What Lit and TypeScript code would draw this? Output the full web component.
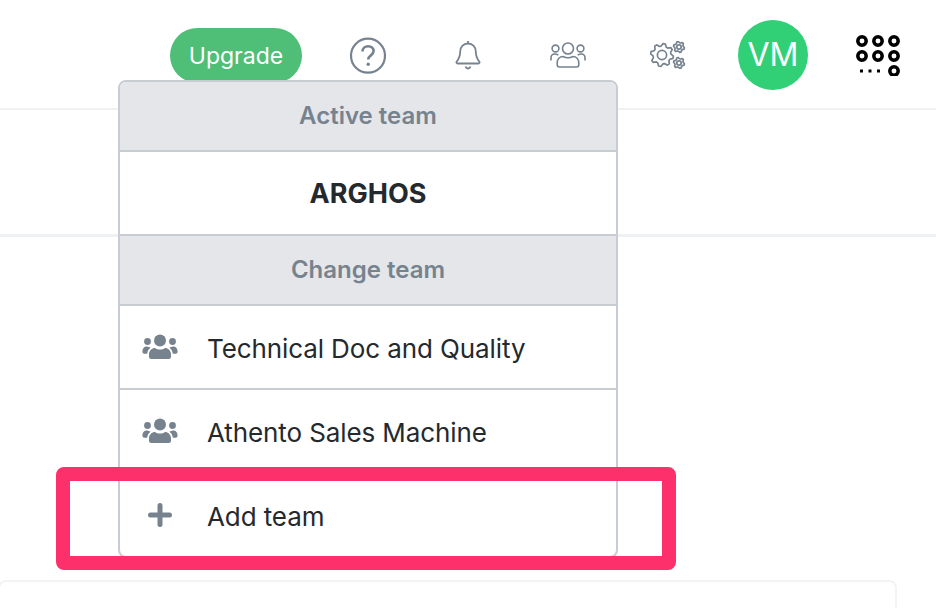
import { LitElement, html, css, svg } from 'lit';
import { customElement } from 'lit/decorators.js';

const teamIcon = html`
  <svg class="row-icon" width="36" height="26" viewBox="0 0 36 26" fill="#76838f">
    <circle cx="18" cy="6.5" r="6" />
    <circle cx="5.5" cy="7.5" r="3.4" />
    <circle cx="30.5" cy="7.5" r="3.4" />
    <path d="M9.5 25a2.5 2.5 0 0 1-2.5-2.5v-2c0-4 3-6.5 6-6.5 1.500 1 3 1.500 5 1.500s3.500-.5 5-1.500c3 0 6 2.500 6 6.500v2a2.500 2.500 0 0 1-2.500 2.500z" />
    <path d="M.4 17.500c0-3 1.600-5 4-5 1.500 0 3 .6 4.200 1.300-2 1.500-3.200 3.400-3.400 6H2.400c-1.300 0-2-1-2-2.300z" />
    <path d="M35.600 17.500c0-3-1.600-5-4-5-1.500 0-3 .6-4.200 1.300 2 1.500 3.200 3.400 3.400 6h2.800c1.300 0 2-1 2-2.300z" />
  </svg>
`;

const gear = (cx: number, cy: number, r: number, teeth: number) => {
  const pts: string[] = [];
  for (let i = 0; i < teeth * 4; i++) {
    const a = (i / (teeth * 4)) * Math.PI * 2 + Math.PI / teeth / 4;
    const rad = i % 4 < 2 ? r : r * 0.78;
    pts.push(`${(cx + Math.cos(a) * rad).toFixed(2)},${(cy + Math.sin(a) * rad).toFixed(2)}`);
  }
  return svg`<polygon points=${pts.join(' ')} stroke-linejoin="round" /><circle cx=${cx} cy=${cy} r=${r * 0.4} />`;
};

@customElement('app-root')
export class AppRoot extends LitElement {
  static styles = css`
    :host {
      display: block;
      position: relative;
      width: 936px;
      height: 608px;
      overflow: hidden;
      background: #fff;
      font-family: Inter, 'Noto Sans', sans-serif;
      color: #24292e;
    }

    .topbar {
      height: 106px;
      padding-top: 2px;
      border-bottom: 2px solid #f0f1f2;
      display: flex;
      align-items: center;
      justify-content: flex-end;
      padding-right: 36px;
    }

    .upgrade {
      width: 132px;
      height: 54px;
      padding-top: 1px;
      border-radius: 28px;
      background: #4fbe77;
      color: #fff;
      font-size: 23px;
      display: flex;
      align-items: center;
      justify-content: center;
      margin-right: 16px;
    }

    .nav-icon {
      width: 100px;
      display: flex;
      justify-content: center;
      align-items: center;
    }

    .avatar {
      width: 70px;
      height: 70px;
      padding-bottom: 1px;
      box-sizing: border-box;
      border-radius: 50%;
      background: #31d077;
      color: #fff;
      font-size: 32px;
      display: flex;
      align-items: center;
      justify-content: center;
      margin-left: 20px;
      margin-right: 48px;
    }

    .apps {
      flex: none;
    }

    .subbar {
      height: 124px;
      border-bottom: 3px solid #f0f1f2;
    }

    .content {
      padding: 343px 39px 0 0;
    }

    .card {
      height: 60px;
      border: 2px solid #f2f3f4;
      border-radius: 8px;
      margin-left: -2px;
    }

    .menu {
      position: absolute;
      left: 118px;
      top: 80px;
      width: 500px;
      box-sizing: border-box;
      border: 2px solid #c8ccd3;
      border-radius: 8px;
      background: #fff;
      overflow: hidden;
    }

    .menu-title {
      height: 66px;
      padding-bottom: 2px;
      background: #e4e6ea;
      color: #76838f;
      font-size: 24px;
      font-weight: 600;
      display: flex;
      align-items: center;
      justify-content: center;
    }

    .menu-active {
      height: 82px;
      font-size: 27px;
      font-weight: 700;
      display: flex;
      align-items: center;
      justify-content: center;
    }

    .menu-row {
      height: 82px;
      display: flex;
      align-items: center;
      font-size: 26px;
      letter-spacing: -0.1px;
      padding-left: 22px;
    }

    .menu-row span {
      padding-top: 2px;
    }

    .menu > * + * {
      border-top: 2px solid #c8ccd3;
    }

    .row-icon {
      flex: none;
      margin-right: 29px;
    }

    .highlight {
      position: absolute;
      left: 56px;
      top: 467px;
      width: 620px;
      height: 103px;
      box-sizing: border-box;
      border: 14px solid #fe306c;
      border-radius: 8px;
    }
  `;

  render() {
    return html`
      <div class="topbar">
        <div class="upgrade">Upgrade</div>
        <div class="nav-icon">
          <svg width="38" height="38" viewBox="0 0 38 38" fill="none" stroke="#76838f" stroke-width="2.2">
            <g transform="translate(0 .7)">
              <circle cx="19" cy="19" r="17" />
              <path d="M13.500 14.800c0-3.200 2.500-5.300 5.600-5.300s5.500 2 5.500 4.900c0 4.300-5.400 4.200-5.400 8.400" stroke-width="2.600" />
              <circle cx="19.200" cy="27.500" r="1.700" fill="#76838f" stroke="none" />
            </g>
          </svg>
        </div>
        <div class="nav-icon">
          <svg width="26" height="30" viewBox="0 0 26 30" fill="none" stroke="#76838f" stroke-width="1.800" stroke-linejoin="round">
            <path d="M13 1v2.500M13 3.500c-4.800 0-7.800 3.500-7.800 8 0 6-1.700 7.800-3.500 10-.8 1 0 2 .9 2h20.800c.9 0 1.700-1 .9-2-1.800-2.200-3.500-4-3.500-10 0-4.500-3-8-7.800-8z" />
            <path d="M10.500 26.500c.4 1.300 1.300 2 2.500 2s2.100-.7 2.500-2" />
          </svg>
        </div>
        <div class="nav-icon">
          <svg width="36" height="26" viewBox="0 0 36 26" fill="none" stroke="#76838f" stroke-width="1.600">
            <circle cx="18" cy="6.500" r="5.500" />
            <circle cx="5.500" cy="6.500" r="3.400" />
            <circle cx="30.500" cy="6.500" r="3.400" />
            <path d="M9.500 25c-1.400 0-2.300-.9-2.300-2.200v-2.300c0-3.500 2.600-6 5.800-6 1.500.8 3 1.300 5 1.300s3.500-.5 5-1.300c3.200 0 5.800 2.500 5.800 6v2.300c0 1.300-.9 2.200-2.300 2.200z" />
            <path d="M1 18.500v-2.800c0-2 1.500-3.700 3.500-3.700 1 0 2.500.3 3.800 1M35 18.500v-2.800c0-2-1.500-3.700-3.500-3.700-1 0-2.500.3-3.800 1" />
          </svg>
        </div>
        <div class="nav-icon">
          <svg width="36" height="28" viewBox="0 0 36 28" fill="none" stroke="#76838f" stroke-width="1.700">
            ${gear(12, 14, 11.500, 8)}
            ${gear(29, 6, 5.500, 6)}
            ${gear(29, 22, 5.500, 6)}
          </svg>
        </div>
        <div class="avatar">VM</div>
        <svg class="apps" width="44" height="42" viewBox="0 0 44 42" fill="none" stroke="#000" stroke-width="3.500">
          ${[6, 22, 38].flatMap((x) => [7, 22].map((y) => svg`<circle cx=${x} cy=${y} r="4.200" />`))}
          <circle cx="38" cy="37" r="4.200" />
          <path d="M4 37h3M12.500 37h3M21 37h3" stroke-width="3" />
        </svg>
      </div>
      <div class="subbar"></div>
      <div class="content"><div class="card"></div></div>

      <div class="menu">
        <div class="menu-title">Active team</div>
        <div class="menu-active">ARGHOS</div>
        <div class="menu-title">Change team</div>
        <div class="menu-row">${teamIcon}<span>Technical Doc and Quality</span></div>
        <div class="menu-row">${teamIcon}<span>Athento Sales Machine</span></div>
        <div class="menu-row">
          <svg class="row-icon" width="36" height="26" viewBox="0 0 36 26" fill="none" stroke="#76838f" stroke-width="5" stroke-linecap="round">
            <path d="M18 3.500v19M8.500 13h19" />
          </svg>
          <span>Add team</span>
        </div>
      </div>
      <div class="highlight"></div>
    `;
  }
}
